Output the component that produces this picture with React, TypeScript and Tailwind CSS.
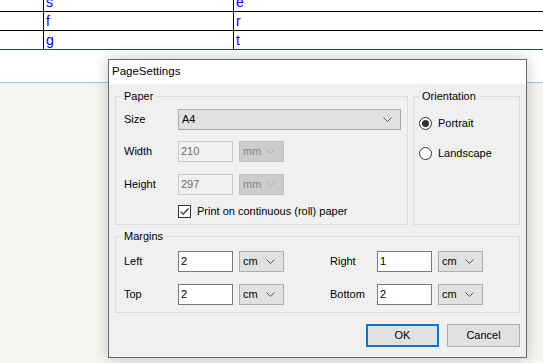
import React from "react";

const rows = [
  { a: "", b: "s", c: "e" },
  { a: "", b: "f", c: "r" },
  { a: "", b: "g", c: "t" },
];

function Chevron( { disabled }: { disabled?: boolean } ) {
  return (
    <svg width="9" height="5" viewBox="0 0 9 5" className="shrink-0">
      <path d="M0.5 0.5 L4.5 4.5 L8.5 0.5" fill="none" stroke={disabled ? "#a8a8a8" : "#555"} strokeWidth="1" />
    </svg>
  );
}

function Combo( { value, width, disabled }: { value: string; width: string; disabled?: boolean } ) {
  return (
    <div
      className={`flex h-[21px] items-center justify-between border pl-[3px] pr-[8px] ${width} ${
        disabled ? "border-[#bfbfbf] bg-[#cccccc] text-[#838383]" : "border-[#adadad] bg-[#e1e1e1] text-black"
      }`}
    >
      <span>{value}</span>
      <Chevron disabled={disabled} />
    </div>
  );
}

function TextBox( { value, disabled }: { value: string; disabled?: boolean } ) {
  return (
    <div
      className={`flex h-[21px] w-[55px] items-center border pl-[2px] ${
        disabled ? "border-[#cccccc] bg-[#f0f0f0] text-[#6d6d6d]" : "border-[#7a7a7a] bg-white text-black"
      }`}
    >
      {value}
    </div>
  );
}

function GroupBox( { title, className, children }: { title: string; className: string; children: React.ReactNode } ) {
  return (
    <div className={`relative border border-[#dcdcdc] ${className}`}>
      <span className="absolute -top-[9px] left-[5px] bg-[#f0f0f0] px-[3px] leading-[16px]">{title}</span>
      {children}
    </div>
  );
}

function Radio( { label, checked }: { label: string; checked?: boolean } ) {
  return (
    <div className="flex h-[13px] items-center">
      <div className="flex h-[13px] w-[13px] items-center justify-center rounded-full border border-[#333] bg-white">
        {checked && <div className="h-[7px] w-[7px] rounded-full bg-[#333]" />}
      </div>
      <span className="ml-[6px]">{label}</span>
    </div>
  );
}

export default function App() {

  return (

    <div className="relative h-[363px] w-[543px] overflow-hidden bg-white font-['Liberation_Sans',Arial,sans-serif] text-[11px] text-black">

      {/* table behind */}
      <div className="-mt-[7px]">
        {
          rows.map( ( row, i ) => (
            <div
              key={i}
              className={`flex h-[19px] border-b text-[14px] leading-[18px] text-[#0000ff] ${i === rows.length - 1 ? "border-[#1e4b5c]" : "border-black"}`}
            >
              <div className="w-[44px] border-r border-black">{row.a}</div>
              <div className="w-[190px] border-r border-black pl-[2px]">{row.b}</div>
              <div className="flex-1 pl-[2px]">{row.c}</div>
            </div>
          ) )
        }
      </div>

      <div className="h-[32px] bg-white" />
      <div className="h-px bg-[#8ccbea]" />
      <div className="h-[290px] bg-[#f6f5f2]" />

      {/* dialog window */}
      <div className="absolute left-[108px] top-[59px] flex h-[299px] w-[419px] flex-col border border-[#6b6b6b] bg-[#f0f0f0] shadow-[0_0_14px_rgba(0,0,0,0.22)]">

        <div className="flex h-[24px] items-center bg-white pl-[3px] text-[11.5px]">PageSettings</div>

        <div className="flex flex-col px-[6px] pt-[12px]">

          <div className="flex gap-[5px]">

            {/* Paper */}
            <GroupBox title="Paper" className="h-[129px] w-[293px] pl-[8px] pt-[12px]">

              <div className="flex h-[21px] items-center">
                <span className="w-[54px]">Size</span>
                <Combo value="A4" width="w-[223px]" />
              </div>

              <div className="mt-[11px] flex items-center">
                <span className="w-[54px]">Width</span>
                <TextBox value="210" disabled />
                <div className="ml-[6px]"><Combo value="mm" width="w-[45px]" disabled /></div>
              </div>

              <div className="mt-[12px] flex items-center">
                <span className="w-[54px]">Height</span>
                <TextBox value="297" disabled />
                <div className="ml-[6px]"><Combo value="mm" width="w-[45px]" disabled /></div>
              </div>

              <div className="ml-[54px] mt-[10px] flex h-[13px] items-center">
                <div className="flex h-[13px] w-[13px] items-center justify-center border border-[#333] bg-white">
                  <svg width="11" height="11" viewBox="0 0 11 11">
                    <path d="M1.5 5.5 L4.2 8.2 L9.5 2.5" fill="none" stroke="#333" strokeWidth="1.2" />
                  </svg>
                </div>
                <span className="ml-[6px]">Print on continuous (roll) paper</span>
              </div>

            </GroupBox>

            {/* Orientation */}
            <GroupBox title="Orientation" className="h-[129px] w-[107px] pl-[5px] pt-[20px]">
              <Radio label="Portrait" checked />
              <div className="mt-[17px]"><Radio label="Landscape" /></div>
            </GroupBox>

          </div>

          {/* Margins */}
          <GroupBox title="Margins" className="mt-[11px] h-[77px] w-[405px] pl-[8px] pt-[14px]">

            {
              [ [ "Left", "2", "Right", "1" ], [ "Top", "2", "Bottom", "2" ] ].map( ( [ l, lv, r, rv ], i ) => (
                <div key={l} className={`flex items-center ${i > 0 ? "mt-[12px]" : ""}`}>
                  <span className="w-[54px]">{l}</span>
                  <TextBox value={lv} />
                  <div className="ml-[6px]"><Combo value="cm" width="w-[45px]" /></div>
                  <span className="ml-[46px] w-[47px]">{r}</span>
                  <TextBox value={rv} />
                  <div className="ml-[6px]"><Combo value="cm" width="w-[45px]" /></div>
                </div>
              ) )
            }

          </GroupBox>

          <div className="mt-[11px] flex justify-end gap-[8px] text-[11px]">
            <button type="button" className="h-[23px] w-[73px] border-2 border-[#0078d7] bg-[#e1e1e1]">OK</button>
            <button type="button" className="h-[23px] w-[73px] border border-[#adadad] bg-[#e1e1e1]">Cancel</button>
          </div>

        </div>

      </div>

    </div>

  );

}
